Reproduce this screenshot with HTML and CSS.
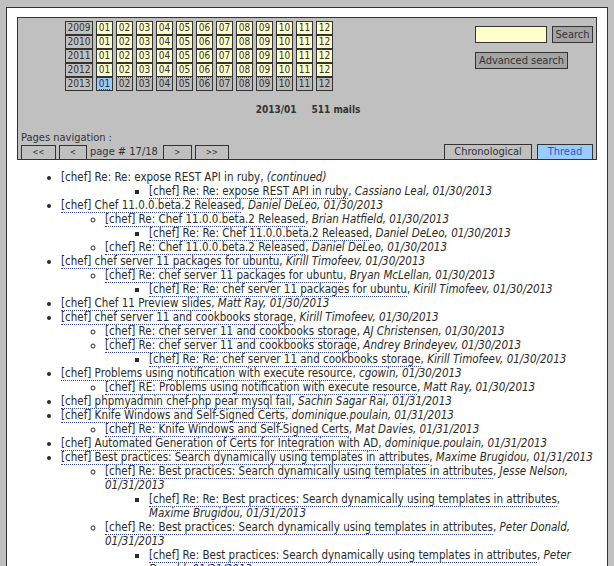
FILE: index.html
```html
<!DOCTYPE html>
<html>
<head>
<meta charset="utf-8">
<title>chef - 2013/01 - thread</title>
<link rel="stylesheet" href="styles.css">
</head>
<body>
<div class="page">
  <div class="header">
    <div class="top">
      <div class="cal">
        <div class="c yr">2009</div><div class="c m">01</div><div class="c m">02</div><div class="c m">03</div><div class="c m">04</div><div class="c m">05</div><div class="c m">06</div><div class="c m">07</div><div class="c m">08</div><div class="c m">09</div><div class="c m">10</div><div class="c m">11</div><div class="c m">12</div>
        <div class="c yr">2010</div><div class="c m">01</div><div class="c m">02</div><div class="c m">03</div><div class="c m">04</div><div class="c m">05</div><div class="c m">06</div><div class="c m">07</div><div class="c m">08</div><div class="c m">09</div><div class="c m">10</div><div class="c m">11</div><div class="c m">12</div>
        <div class="c yr">2011</div><div class="c m">01</div><div class="c m">02</div><div class="c m">03</div><div class="c m">04</div><div class="c m">05</div><div class="c m">06</div><div class="c m">07</div><div class="c m">08</div><div class="c m">09</div><div class="c m">10</div><div class="c m">11</div><div class="c m">12</div>
        <div class="c yr">2012</div><div class="c m">01</div><div class="c m">02</div><div class="c m">03</div><div class="c m">04</div><div class="c m">05</div><div class="c m">06</div><div class="c m">07</div><div class="c m">08</div><div class="c m">09</div><div class="c m">10</div><div class="c m">11</div><div class="c m">12</div>
        <div class="c yr">2013</div><div class="c cur"><span class="ul">01</span></div><div class="c off dt">02</div><div class="c off dt">03</div><div class="c off dt">04</div><div class="c off dt">05</div><div class="c off dt">06</div><div class="c off dt">07</div><div class="c off dt">08</div><div class="c off dt">09</div><div class="c off dt">10</div><div class="c off dt">11</div><div class="c off">12</div>
      </div>
      <div class="search">
        <div class="srow">
          <input class="sinput" type="text">
          <button class="btn sbtn">Search</button>
        </div>
        <button class="btn adv">Advanced search</button>
      </div>
    </div>
    <div class="summary"><span class="month">2013/01</span><span class="count">511 mails</span></div>
    <div class="pnlabel">Pages navigation :</div>
    <div class="navrow">
      <div class="pager">
        <span class="pb w1">&lt;&lt;</span>
        <span class="pb w2">&lt;</span>
        <span class="ptext">page # 17/18</span>
        <span class="pb w3">&gt;</span>
        <span class="pb w4">&gt;&gt;</span>
      </div>
      <div class="tabs">
        <span class="tab chrono">Chronological</span>
        <span class="tab thread">Thread</span>
      </div>
    </div>
  </div>

  <ul class="thr">
    <li>[chef] Re: Re: expose REST API in ruby, <i>(continued)</i>
      <ul>
        <li class="nob">
          <ul>
            <li><a class="t">[chef] Re: Re: expose REST API in ruby</a>, <i>Cassiano Leal, 01/30/2013</i></li>
          </ul>
        </li>
      </ul>
    </li>
    <li><a class="t">[chef] Chef 11.0.0.beta.2 Released</a>, <i>Daniel DeLeo, 01/30/2013</i>
      <ul>
        <li><a class="t">[chef] Re: Chef 11.0.0.beta.2 Released</a>, <i>Brian Hatfield, 01/30/2013</i>
          <ul>
            <li><a class="t">[chef] Re: Re: Chef 11.0.0.beta.2 Released</a>, <i>Daniel DeLeo, 01/30/2013</i></li>
          </ul>
        </li>
        <li><a class="t">[chef] Re: Chef 11.0.0.beta.2 Released</a>, <i>Daniel DeLeo, 01/30/2013</i></li>
      </ul>
    </li>
    <li><a class="t">[chef] chef server 11 packages for ubuntu</a>, <i>Kirill Timofeev, 01/30/2013</i>
      <ul>
        <li><a class="t">[chef] Re: chef server 11 packages for ubuntu</a>, <i>Bryan McLellan, 01/30/2013</i>
          <ul>
            <li><a class="t">[chef] Re: Re: chef server 11 packages for ubuntu</a>, <i>Kirill Timofeev, 01/30/2013</i></li>
          </ul>
        </li>
      </ul>
    </li>
    <li><a class="t">[chef] Chef 11 Preview slides</a>, <i>Matt Ray, 01/30/2013</i></li>
    <li><a class="t">[chef] chef server 11 and cookbooks storage</a>, <i>Kirill Timofeev, 01/30/2013</i>
      <ul>
        <li><a class="t">[chef] Re: chef server 11 and cookbooks storage</a>, <i>AJ Christensen, 01/30/2013</i></li>
        <li><a class="t">[chef] Re: chef server 11 and cookbooks storage</a>, <i>Andrey Brindeyev, 01/30/2013</i>
          <ul>
            <li><a class="t">[chef] Re: Re: chef server 11 and cookbooks storage</a>, <i>Kirill Timofeev, 01/30/2013</i></li>
          </ul>
        </li>
      </ul>
    </li>
    <li><a class="t">[chef] Problems using notification with execute resource</a>, <i>cgowin, 01/30/2013</i>
      <ul>
        <li><a class="t">[chef] RE: Problems using notification with execute resource</a>, <i>Matt Ray, 01/30/2013</i></li>
      </ul>
    </li>
    <li><a class="t">[chef] phpmyadmin chef-php pear mysql fail</a>, <i>Sachin Sagar Rai, 01/31/2013</i></li>
    <li><a class="t">[chef] Knife Windows and Self-Signed Certs</a>, <i>dominique.poulain, 01/31/2013</i>
      <ul>
        <li><a class="t">[chef] Re: Knife Windows and Self-Signed Certs</a>, <i>Mat Davies, 01/31/2013</i></li>
      </ul>
    </li>
    <li><a class="t">[chef] Automated Generation of Certs for Integration with AD</a>, <i>dominique.poulain, 01/31/2013</i></li>
    <li><a class="t">[chef] Best practices: Search dynamically using templates in attributes</a>, <i>Maxime Brugidou, 01/31/2013</i>
      <ul>
        <li><a class="t">[chef] Re: Best practices: Search dynamically using templates in attributes</a>, <i>Jesse Nelson, 01/31/2013</i>
          <ul>
            <li><a class="t">[chef] Re: Re: Best practices: Search dynamically using templates in attributes</a>, <i>Maxime Brugidou, 01/31/2013</i></li>
          </ul>
        </li>
        <li><a class="t">[chef] Re: Best practices: Search dynamically using templates in attributes</a>, <i>Peter Donald, 01/31/2013</i>
          <ul>
            <li><a class="t">[chef] Re: Best practices: Search dynamically using templates in attributes</a>, <i>Peter Donald, 01/31/2013</i></li>
          </ul>
        </li>
      </ul>
    </li>
  </ul>
</div>
</body>
</html>
```

FILE: styles.css
```css
html, body {
  margin: 0;
  padding: 0;
}
body {
  background: #c0c0c0;
  font-family: "DejaVu Sans Condensed", "DejaVu Sans", sans-serif;
  color: #333;
  padding: 7px 6px 0 6px;
}
.page {
  background: #fff;
  border: 1px solid #333;
  border-bottom: none;
  padding: 9px 10px 20px 10px;
}
.header {
  background: #c0c0c0;
  border: 1px solid #333;
  padding: 3px 3px 0 3px;
  font-size: 11px;
}
.top {
  display: flex;
  justify-content: space-between;
  align-items: flex-start;
}
.cal {
  margin-left: 44px;
  display: grid;
  grid-template-columns: 28px repeat(12, 17px);
  grid-auto-rows: 14px;
  column-gap: 3px;
}
.c {
  box-sizing: border-box;
  border: 1px solid #333;
  font-size: 10px;
  line-height: 12px;
  text-align: center;
  color: #333;
}
.yr { background: #c0c0c0; }
.m { background: #ffffcc; }
.off { background: #bcbcbc; }
.dt { border-top: 1px dotted #3344aa; }
.cur { background: #99ccff; }
.cur .ul { border-bottom: 1px dotted #3344aa; }
.search {
  width: 118px;
  margin-top: 5px;
}
.srow {
  display: flex;
  gap: 5px;
}
.sinput {
  box-sizing: border-box;
  width: 72px;
  height: 17px;
  margin: 0;
  padding: 0 2px;
  border: 1px solid #333;
  background: #ffffcc;
  outline: none;
}
.btn {
  box-sizing: border-box;
  height: 17px;
  margin: 0;
  padding: 0;
  border: 1px solid #333;
  background: #a4a4a4;
  color: #333;
  font-family: "DejaVu Sans Condensed", "DejaVu Sans", sans-serif;
  font-size: 11px;
  line-height: 15px;
}
.sbtn { width: 42px; }
.adv {
  display: block;
  width: 93px;
  margin-top: 9px;
}
.summary {
  margin-top: 12px;
  text-align: center;
  font-size: 10px;
  font-weight: bold;
  line-height: 14px;
  padding-left: 2px;
}
.count { margin-left: 15px; }
.pnlabel {
  margin-top: 14px;
  line-height: 13px;
}
.navrow {
  display: flex;
  justify-content: space-between;
  align-items: flex-end;
}
.pager {
  display: flex;
  align-items: flex-end;
  gap: 3px;
  height: 14px;
}
.pb {
  box-sizing: border-box;
  height: 14px;
  border: 1px solid #333;
  border-bottom: none;
  font-size: 8px;
  line-height: 13px;
  text-align: center;
}
.w1 { width: 35px; }
.w2 { width: 28px; }
.w3 { width: 29px; margin-left: 1px; }
.w4 { width: 34px; }
.ptext {
  line-height: 14px;
  padding-right: 1px;
}
.tabs {
  display: flex;
  gap: 5px;
}
.tab {
  box-sizing: border-box;
  height: 15px;
  border: 1px solid #333;
  border-bottom: none;
  line-height: 14px;
  text-align: center;
}
.chrono { width: 88px; }
.thread {
  width: 56px;
  background: #99ccff;
  color: #3355cc;
}
.thr {
  margin: 10px 0 0 0;
  padding-left: 44px;
  font-size: 11.5px;
  line-height: 14px;
  color: #2a2a2a;
}
.thr ul {
  margin: 0;
  padding-left: 44px;
}
.thr .nob { list-style: none; }
.t {
  color: #2a2a2a;
  text-decoration: none;
  border-bottom: 1px dotted #3344aa;
}
```
